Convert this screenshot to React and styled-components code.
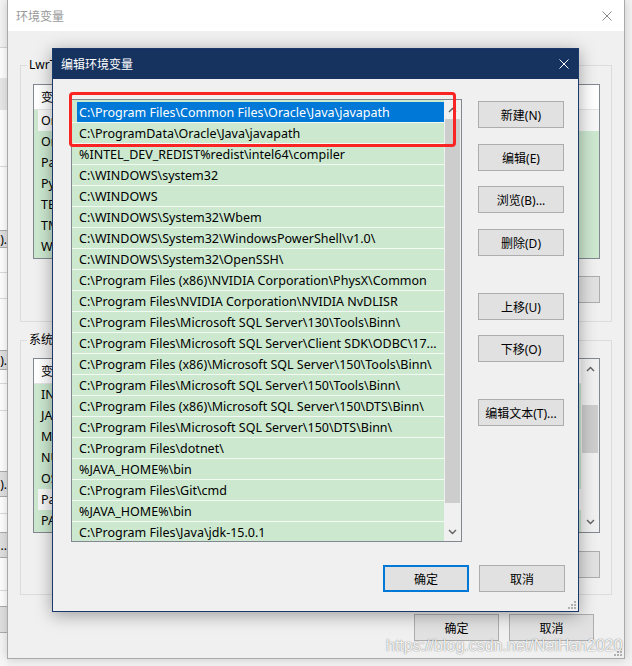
import React from "react";
import styled, { createGlobalStyle, css } from "styled-components";

const FONT = `"Noto Sans", "Noto Sans CJK SC", sans-serif`;

const GlobalStyle = createGlobalStyle`
  html, body { margin: 0; padding: 0; }
  body { background: #f3f3f3; font-family: ${FONT}; }
  #root { width: 632px; height: 666px; }
  * { box-sizing: border-box; }
`;

const Desktop = styled.div`
  position: relative;
  width: 632px;
  height: 666px;
  overflow: hidden;
  background: #f3f3f3;
`;

/* ---------- window behind, left edge ---------- */
const BehindStrip = styled.div`
  position: absolute;
  left: 0;
  top: 0;
  width: 7px;
  height: 666px;
  display: flex;
  flex-direction: column;
  background: #fff;
  overflow: hidden;
`;

const Band = styled.div`
  flex: 0 0 ${(p) => p.$h}px;
  background: ${(p) => p.$bg || "#fff"};
  display: flex;
  align-items: center;
  justify-content: flex-end;
  font-size: 12px;
  color: #000;
  white-space: nowrap;
  overflow: hidden;
  ${(p) =>
    p.$btn &&
    css`
      background: #e1e1e1;
      border-top: 1px solid #adadad;
      border-bottom: 1px solid #adadad;
    `}
`;

/* ---------- main window (环境变量) ---------- */
const MainWindow = styled.div`
  position: absolute;
  left: 7px;
  top: 0;
  width: 618px;
  height: 659px;
  border: 1px solid #a9a9a9;
  border-top: none;
  background: #f0f0f0;
  box-shadow: 0 0 10px rgba(0, 0, 0, 0.18);
  display: flex;
  flex-direction: column;
`;

const MainTitleBar = styled.div`
  flex: 0 0 31px;
  background: #fff;
  display: flex;
  align-items: center;
  justify-content: space-between;
  padding: 0 12px 0 8px;
`;

const MainTitle = styled.span`
  font-size: 12px;
  color: #999;
`;

const MainBody = styled.div`
  flex: 1;
  display: flex;
  flex-direction: column;
  padding: 0 12px;
  position: relative;
`;

const Group = styled.fieldset`
  margin: ${(p) => p.$mt}px 0 0 0;
  padding: ${(p) => p.$pt}px 11px ${(p) => p.$pb}px 12px;
  border: 1px solid #dcdcdc;
  min-width: 0;
  display: flex;
  flex-direction: column;
`;

const GroupLegend = styled.legend`
  font-size: 12px;
  line-height: 16px;
  padding: 0 2px;
  margin-left: -6px;
  color: #000;
  white-space: nowrap;
`;

const VarList = styled.div`
  height: 175px;
  border: 1px solid #828790;
  background: #cce8cf;
  display: flex;
  overflow: hidden;
`;

const VarRows = styled.div`
  flex: 1;
  display: flex;
  flex-direction: column;
  min-width: 0;
`;

const VarHeader = styled.div`
  flex: 0 0 25px;
  background: #fff;
  display: flex;
  align-items: center;
  padding-left: 7px;
  font-size: 12px;
  border-bottom: 1px solid #e5e5e5;
`;

const HeaderCell = styled.span`
  width: ${(p) => p.$w}px;
  white-space: nowrap;
`;

const VarRow = styled.div`
  flex: 0 0 21px;
  line-height: 21px;
  padding-left: 7px;
  font-size: 12.5px;
  white-space: nowrap;
  color: #000;
  ${(p) =>
    p.$sel &&
    css`
      background: linear-gradient(to right, #cce8cf 0 4px, #f7f7f7 4px);
    `}
`;

const ButtonRow = styled.div`
  margin-top: ${(p) => p.$mt}px;
  display: flex;
  justify-content: flex-end;
  gap: 10px;
`;

const WinButton = styled.button`
  width: ${(p) => p.$w || 86}px;
  height: 27px;
  flex: 0 0 auto;
  margin: ${(p) => p.$mt || 0}px 0 0 0;
  padding: 0;
  background: #e1e1e1;
  border: 1px solid #adadad;
  font-family: ${FONT};
  font-size: 12px;
  color: #000;
  display: flex;
  align-items: center;
  justify-content: center;
  white-space: nowrap;
  ${(p) =>
    p.$default &&
    css`
      border: 2px solid #0078d7;
    `}
`;

const Footer = styled.div`
  margin-top: ${(p) => p.$mt}px;
  display: flex;
  justify-content: flex-end;
  gap: 10px;
  padding-right: ${(p) => p.$pr}px;
`;

/* scrollbars */
const VScroll = styled.div`
  flex: 0 0 ${(p) => p.$w}px;
  display: flex;
  flex-direction: column;
  background: #f0f0f0;
`;

const ArrowBox = styled.div`
  flex: 0 0 ${(p) => p.$h}px;
  display: flex;
  align-items: center;
  justify-content: center;
`;

const Track = styled.div`
  flex: 1;
  display: flex;
  flex-direction: column;
  padding: ${(p) => p.$offset}px 1px 0 1px;
`;

const Thumb = styled.div`
  flex: 0 0 ${(p) => p.$h}px;
  background: #cdcdcd;
`;

const Chevron = ({ up }) => (
  <svg width="9" height="6" viewBox="0 0 9 6">
    <polyline
      points={up ? "1,5 4.5,1.5 8,5" : "1,1 4.5,4.5 8,1"}
      fill="none"
      stroke="#606060"
      strokeWidth="1.4"
    />
  </svg>
);

const CloseX = ({ color, size = 10 }) => (
  <svg width={size} height={size} viewBox="0 0 10 10">
    <line x1="0.5" y1="0.5" x2="9.5" y2="9.5" stroke={color} strokeWidth="1" />
    <line x1="9.5" y1="0.5" x2="0.5" y2="9.5" stroke={color} strokeWidth="1" />
  </svg>
);

const Grip = ({ color = "#b0b0b0" }) => (
  <svg width="8" height="8" viewBox="0 0 8 8">
    {[
      [6, 0],
      [6, 3],
      [3, 3],
      [6, 6],
      [3, 6],
      [0, 6],
    ].map(([x, y]) => (
      <rect key={`${x}-${y}`} x={x} y={y} width="2" height="2" fill={color} />
    ))}
  </svg>
);

const GripSlot = styled.div`
  position: absolute;
  right: ${(p) => p.$r}px;
  bottom: ${(p) => p.$b}px;
  display: flex;
`;

/* ---------- foreground dialog (编辑环境变量) ---------- */
const Dialog = styled.div`
  position: absolute;
  left: 52px;
  top: 48px;
  width: 527px;
  height: 564px;
  border: 1px solid #1b3a6b;
  background: #f0f0f0;
  box-shadow: 0 3px 16px rgba(0, 0, 0, 0.35);
  display: flex;
  flex-direction: column;
`;

const DialogTitleBar = styled.div`
  flex: 0 0 30px;
  background: #16335f;
  color: #fff;
  display: flex;
  align-items: center;
  justify-content: space-between;
  padding: 0 9px 0 8px;
`;

const DialogTitle = styled.span`
  font-size: 12px;
  color: #fff;
`;

const DialogBody = styled.div`
  flex: 1;
  display: flex;
  flex-direction: column;
  padding: 20px 13px 0 18px;
`;

const TopArea = styled.div`
  display: flex;
  gap: 16px;
`;

const PathList = styled.div`
  width: 391px;
  height: 443px;
  border: 1px solid #828790;
  background: #cce8cf;
  display: flex;
  overflow: hidden;
`;

const PathRows = styled.div`
  flex: 1;
  display: flex;
  flex-direction: column;
  padding-top: 2px;
  overflow: hidden;
  min-width: 0;
`;

const PathRow = styled.div`
  flex: 0 0 21px;
  height: 21px;
  padding: 2px 0 0 7px;
  line-height: 18px;
  font-size: 12.5px;
  white-space: nowrap;
  overflow: hidden;
  color: #000;
  border-bottom: 1px solid #f3faf4;
  ${(p) =>
    p.$sel &&
    css`
      background: linear-gradient(to right, #cce8cf 0 5px, #0078d7 5px);
      color: #fff;
    `}
`;

const ButtonColumn = styled.div`
  display: flex;
  flex-direction: column;
  padding-top: 2px;
`;

const Highlight = styled.div`
  position: absolute;
  left: 69px;
  top: 92px;
  width: 387px;
  height: 55px;
  border: 3px solid #fb2424;
  border-radius: 4px;
  pointer-events: none;
`;

const Watermark = styled.div`
  position: absolute;
  left: 386px;
  top: 637px;
  font-family: "Liberation Sans", Arial, sans-serif;
  font-size: 16px;
  line-height: 18px;
  color: rgba(255, 255, 255, 0.92);
  text-shadow: 0 0 1px rgba(0, 0, 0, 0.45), 0 0 2px rgba(0, 0, 0, 0.2);
  white-space: nowrap;
  pointer-events: none;
`;

const behindBands = [
  { h: 47, bg: "#f4f4f4" },
  { h: 1, bg: "#d6d6d6" },
  { h: 30 },
  { h: 32, bg: "#e9e9e9" },
  { h: 56 },
  { h: 1, bg: "#dcdcdc" },
  { h: 63 },
  { h: 18, btn: true, t: ")." },
  { h: 24 },
  { h: 1, bg: "#dcdcdc" },
  { h: 25 },
  { h: 1, bg: "#dcdcdc" },
  { h: 51 },
  { h: 20, btn: true, t: ")." },
  { h: 13 },
  { h: 1, bg: "#dcdcdc" },
  { h: 26 },
  { h: 1, bg: "#dcdcdc" },
  { h: 60 },
  { h: 26, btn: true, t: ")." },
  { h: 16 },
  { h: 1, bg: "#dcdcdc" },
  { h: 18 },
  { h: 26, btn: true, t: "..." },
  { h: 32 },
  { h: 1, bg: "#dcdcdc" },
  { h: 15 },
  { h: 27, btn: true, t: "" },
  { h: 40, bg: "#f6f6f6" },
];

const userVars = [
  { n: "OneDrive", sel: true },
  { n: "OneDriveConsumer" },
  { n: "Path" },
  { n: "PyCharm Community Edition" },
  { n: "TEMP" },
  { n: "TMP" },
  { n: "WebStorm" },
];

const sysVars = [
  { n: "INTEL_DEV_REDIST" },
  { n: "JAVA_HOME" },
  { n: "MIC_LD_LIBRARY_PATH" },
  { n: "NUMBER_OF_PROCESSORS" },
  { n: "OS" },
  { n: "Path", sel: true },
  { n: "PATHEXT" },
];

const paths = [
  "C:\\Program Files\\Common Files\\Oracle\\Java\\javapath",
  "C:\\ProgramData\\Oracle\\Java\\javapath",
  "%INTEL_DEV_REDIST%redist\\intel64\\compiler",
  "C:\\WINDOWS\\system32",
  "C:\\WINDOWS",
  "C:\\WINDOWS\\System32\\Wbem",
  "C:\\WINDOWS\\System32\\WindowsPowerShell\\v1.0\\",
  "C:\\WINDOWS\\System32\\OpenSSH\\",
  "C:\\Program Files (x86)\\NVIDIA Corporation\\PhysX\\Common",
  "C:\\Program Files\\NVIDIA Corporation\\NVIDIA NvDLISR",
  "C:\\Program Files\\Microsoft SQL Server\\130\\Tools\\Binn\\",
  "C:\\Program Files\\Microsoft SQL Server\\Client SDK\\ODBC\\17...",
  "C:\\Program Files (x86)\\Microsoft SQL Server\\150\\Tools\\Binn\\",
  "C:\\Program Files\\Microsoft SQL Server\\150\\Tools\\Binn\\",
  "C:\\Program Files (x86)\\Microsoft SQL Server\\150\\DTS\\Binn\\",
  "C:\\Program Files\\Microsoft SQL Server\\150\\DTS\\Binn\\",
  "C:\\Program Files\\dotnet\\",
  "%JAVA_HOME%\\bin",
  "C:\\Program Files\\Git\\cmd",
  "%JAVA_HOME%\\bin",
  "C:\\Program Files\\Java\\jdk-15.0.1",
];

const sideButtons = [
  { t: "新建(N)", mt: 0 },
  { t: "编辑(E)", mt: 16 },
  { t: "浏览(B)...", mt: 15 },
  { t: "删除(D)", mt: 16 },
  { t: "上移(U)", mt: 37 },
  { t: "下移(O)", mt: 15 },
  { t: "编辑文本(T)...", mt: 37 },
];

function VarTable({ rows, scroll }) {
  return (
    <VarList>
      <VarRows>
        <VarHeader>
          <HeaderCell $w={170}>变量</HeaderCell>
          <HeaderCell $w={300}>值</HeaderCell>
        </VarHeader>
        {rows.map((r) => (
          <VarRow key={r.n} $sel={r.sel}>
            {r.n}
          </VarRow>
        ))}
      </VarRows>
      {scroll && (
        <VScroll $w={18}>
          <ArrowBox $h={20}>
            <Chevron up />
          </ArrowBox>
          <Track $offset={26}>
            <Thumb $h={48} />
          </Track>
          <ArrowBox $h={20}>
            <Chevron />
          </ArrowBox>
        </VScroll>
      )}
    </VarList>
  );
}

export default function App() {
  return (
    <Desktop>
      <GlobalStyle />
      <BehindStrip>
        {behindBands.map((b, i) => (
          <Band key={i} $h={b.h} $bg={b.bg} $btn={b.btn}>
            {b.t}
          </Band>
        ))}
      </BehindStrip>

      <MainWindow>
        <MainTitleBar>
          <MainTitle>环境变量</MainTitle>
          <CloseX color="#8a8a8a" />
        </MainTitleBar>
        <MainBody>
          <Group $mt={26} $pt={11} $pb={18}>
            <GroupLegend>LwrT 的用户变量(U)</GroupLegend>
            <VarTable rows={userVars} />
            <ButtonRow $mt={17}>
              <WinButton $w={85}>新建(N)...</WinButton>
              <WinButton $w={85}>编辑(E)...</WinButton>
              <WinButton $w={85}>删除(D)</WinButton>
            </ButtonRow>
          </Group>
          <Group $mt={10} $pt={10} $pb={16}>
            <GroupLegend>系统变量(S)</GroupLegend>
            <VarTable rows={sysVars} scroll />
            <ButtonRow $mt={18}>
              <WinButton $w={85}>新建(W)...</WinButton>
              <WinButton $w={85}>编辑(I)...</WinButton>
              <WinButton $w={85}>删除(L)</WinButton>
            </ButtonRow>
          </Group>
          <Footer $mt={19} $pr={18}>
            <WinButton $w={85}>确定</WinButton>
            <WinButton $w={85}>取消</WinButton>
          </Footer>
          <GripSlot $r={2} $b={2}>
            <Grip />
          </GripSlot>
        </MainBody>
      </MainWindow>

      <Dialog>
        <DialogTitleBar>
          <DialogTitle>编辑环境变量</DialogTitle>
          <CloseX color="#ffffff" />
        </DialogTitleBar>
        <DialogBody>
          <TopArea>
            <PathList>
              <PathRows>
                {paths.map((p, i) => (
                  <PathRow key={i} $sel={i === 0}>
                    {p}
                  </PathRow>
                ))}
              </PathRows>
              <VScroll $w={17}>
                <ArrowBox $h={19}>
                  <Chevron up />
                </ArrowBox>
                <Track $offset={0}>
                  <Thumb $h={384} />
                </Track>
                <ArrowBox $h={19}>
                  <Chevron />
                </ArrowBox>
              </VScroll>
            </PathList>
            <ButtonColumn>
              {sideButtons.map((b) => (
                <WinButton key={b.t} $mt={b.mt}>
                  {b.t}
                </WinButton>
              ))}
            </ButtonColumn>
          </TopArea>
          <Footer $mt={23} $pr={0}>
            <WinButton $default>确定</WinButton>
            <WinButton>取消</WinButton>
          </Footer>
        </DialogBody>
        <GripSlot $r={2} $b={2}>
          <Grip />
        </GripSlot>
      </Dialog>

      <Highlight />
      <Watermark>https://blog.csdn.net/NeiHan2020</Watermark>
    </Desktop>
  );
}
